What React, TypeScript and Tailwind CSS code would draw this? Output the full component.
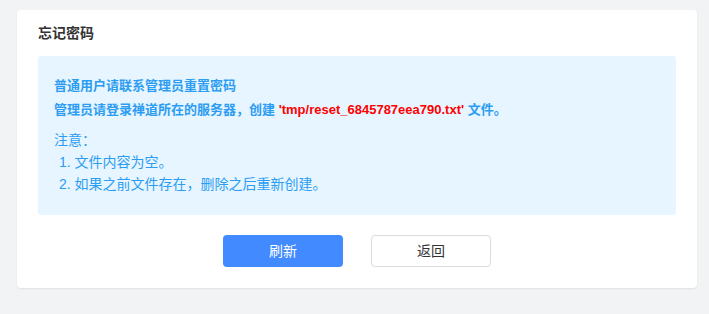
import React from "react";

const ForgotPassword: React.FC = () => {
  return (
    <div
      className="min-h-[314px] w-full bg-[#f2f3f5] pt-[10px] pb-[26px]"
      style={{ fontFamily: '"Liberation Sans", Arial, "Noto Sans CJK SC", sans-serif' }}
    >
      <div className="ml-[17px] w-[680px] rounded-[4px] bg-white px-[21px] pt-[13px] pb-[21px] shadow-[0_1px_2px_rgba(0,0,0,0.08)]">
        <h2 className="h-[20px] text-[14px] leading-[20px] font-bold text-[#333]">忘记密码</h2>

        <div className="mt-[13px] rounded-[3px] bg-[#e6f5ff] px-[16px] pt-[18px] pb-[20px] text-[#2c9df2]">
          <p className="text-[13px] leading-[24px] font-bold">普通用户请联系管理员重置密码</p>
          <p className="text-[13px] leading-[24px] font-bold">
            管理员请登录禅道所在的服务器，创建{" "}
            <span className="text-[#ff0000]">'tmp/reset_6845787eea790.txt'</span> 文件。
          </p>
          <div className="text-[14px]">
            <p className="mt-[7px] leading-[22px]">注意：</p>
            <ol className="pl-[5px] leading-[22px]">
              <li>1. 文件内容为空。</li>
              <li>2. 如果之前文件存在，删除之后重新创建。</li>
            </ol>
          </div>
        </div>

        <div className="mt-[20px] flex justify-center gap-[28px]">
          <button className="h-[32px] w-[120px] rounded-[4px] bg-[#418aff] text-[14px] text-white">
            刷新
          </button>
          <button className="h-[32px] w-[120px] rounded-[4px] border border-[#dcdcdc] bg-white text-[14px] text-[#333]">
            返回
          </button>
        </div>
      </div>
    </div>
  );
};

export default function App() {
  return <ForgotPassword />;
}
